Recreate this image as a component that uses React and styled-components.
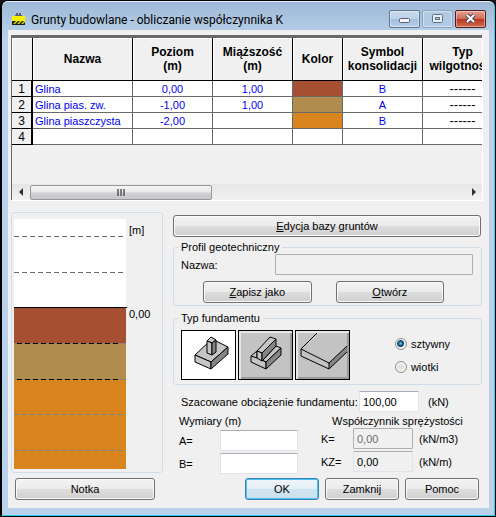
import React, { useState } from "react";
import styled, { createGlobalStyle, css } from "styled-components";

const GlobalStyle = createGlobalStyle`
  * { box-sizing: border-box; }
  body {
    margin: 0;
    background: #14161c;
    color: #000;
    font: 11px/14px "Liberation Sans", Arial, sans-serif;
  }
  button, input { font: inherit; color: inherit; }
`;

const Window = styled.main`
  display: flex;
  flex-direction: column;
  min-height: 100vh;
  padding: 0 6px 8px 6px;
  border: solid #000;
  border-width: 1px 1px 1px 2px;
  border-radius: 7px 7px 0 0;
  background: linear-gradient(#9db8d6, #b9d1ea 36px);
  box-shadow: inset -1px -1px #2fd0ee, inset 0 1px #e4eefa;
`;

const TitleBar = styled.header`
  display: flex;
  align-items: center;
  height: 29px;
  padding: 6px 3px 0 3px;
`;

const Title = styled.h1`
  flex: 1;
  margin: 2px 0 0 5px;
  font: 12px/16px Roboto, sans-serif;
  white-space: nowrap;
`;

const Controls = styled.div`
  display: flex;
  gap: 2px;
`;

const ControlButton = styled.button`
  display: grid;
  place-items: center;
  width: 31px;
  height: 18px;
  padding: 0;
  border: 1px solid ${(p) => (p.$close ? "#5b1a18" : p.$dim ? "#8ea5c0" : "#5f7590")};
  border-radius: 2px;
  background: ${(p) =>
    p.$close
      ? "linear-gradient(#e3a396, #cf6a57 48%, #b83721 52%, #cf6c50)"
      : p.$dim
        ? "#b3cae4"
        : "linear-gradient(#c9daed, #bdd1e8 48%, #a3bddb 52%, #b8d0ea)"};
  box-shadow: inset 0 0 0 1px rgba(255, 255, 255, 0.4);
`;

const Client = styled.div`
  flex: 1;
  padding: 5px 7px 8px 3px;
  background: #f0f0f0;
`;

const GridPane = styled.section`
  display: flex;
  flex-direction: column;
  min-height: 165px;
  margin-bottom: 12px;
  border: solid #696969;
  border-width: 3px 0 0 1px;
  box-shadow: 1px 1px #fff;
`;

const GridScroll = styled.div`
  flex: 1;
  overflow: hidden;
`;

const SoilTable = styled.table`
  width: 491px;
  table-layout: fixed;
  border-collapse: separate;
  border-spacing: 0;
`;

const ColumnHead = styled.th`
  height: 43px;
  padding: 0;
  border: solid #000;
  border-width: 0 1px 1px 0;
  box-shadow: inset 1px 1px #fff;
  background: #f0f0f0;
  font-weight: bold;
  font-size: 12px;
  line-height: 14px;
`;

const RowHead = styled.th`
  height: 16px;
  padding: 0;
  border: solid #000;
  border-width: 0 2px 1px 0;
  background: #f0f0f0;
  font-weight: normal;
  font-size: 12px;
  line-height: 14px;
`;

const Cell = styled.td`
  height: 16px;
  padding: 0 2px;
  border: solid #696969;
  border-width: 0 1px 1px 0;
  background: ${(p) => p.$fill || "#fff"};
  color: ${(p) => (p.$plain ? "#000" : "#0000f0")};
  font-size: ${(p) => (p.$plain ? 13 : 11)}px;
  line-height: 14px;
  text-align: ${(p) => p.$align || "center"};
  white-space: nowrap;
`;

const ScrollBar = styled.div`
  display: flex;
  align-items: center;
  height: 16px;
  background: linear-gradient(#e6e6e6, #f2f2f2);
`;

const ScrollArrow = styled.button`
  display: grid;
  place-items: center;
  width: 18px;
  height: 16px;
  padding: 0;
  border: 0;
  background: none;
`;

const ScrollTrack = styled.div`
  flex: 1;
`;

const ScrollThumb = styled.div`
  display: grid;
  place-items: center;
  width: 42%;
  height: 15px;
  border: 1px solid #979797;
  border-radius: 2px;
  background: linear-gradient(#f5f5f5, #e8e8e8 48%, #d2d2d6 52%, #c8c8cc);
`;

const Lower = styled.div`
  display: grid;
  grid-template-columns: 152px 1fr;
  gap: 10px;
`;

const LeftColumn = styled.div`
  display: flex;
  flex-direction: column;
  justify-content: space-between;
`;

const RightColumn = styled.div`
  display: flex;
  flex-direction: column;
  padding-top: 3px;
`;

const groupFrame = css`
  border: 1px solid #d0dde6;
  border-radius: 3px;
`;

const ProfilePanel = styled.section`
  ${groupFrame}
  height: 261px;
  padding: 6px 2px;
`;

const Button = styled.button`
  height: 22px;
  padding: 0 4px;
  border: 1px solid ${(p) => (p.$primary ? "#3c7fb1" : "#707070")};
  border-radius: 3px;
  background: ${(p) =>
    p.$primary
      ? "linear-gradient(#f0f6fa, #e4eff6 48%, #d0e4ef 52%, #cde2ee)"
      : "linear-gradient(#f2f2f2, #ebebeb 48%, #dddddd 52%, #cfcfcf)"};
  box-shadow: inset 0 0 0 1px ${(p) => (p.$primary ? "#48c4f0" : "#fafafa")};
`;

const NoteButton = styled(Button)`
  margin: 0 8px 0 4px;
`;

const WideButton = styled(Button)`
  margin-right: 1px;
`;

const Group = styled.fieldset`
  ${groupFrame}
  min-width: 0;
  margin: ${(p) => p.$top}px 0 0;
  padding: ${(p) => p.$pad};
`;

const Legend = styled.legend`
  margin-left: -3px;
  padding: 0 3px;
  height: 14px;
`;

const NameRow = styled.div`
  display: grid;
  grid-template-columns: 94px 1fr;
  align-items: center;
`;

const ButtonRow = styled.div`
  display: grid;
  grid-template-columns: 1fr 1fr;
  gap: 24px;
  margin: 6px 29px 0 22px;
`;

const TextBox = styled.input`
  width: 100%;
  min-width: 0;
  height: 21px;
  padding: 0 3px;
  border: 1px solid ${(p) => (p.disabled ? "#afafaf" : "#e2e3ea")};
  border-top-color: ${(p) => (p.disabled ? "#afafaf" : "#abadb3")};
  border-radius: 1px;
  background: ${(p) => (p.disabled || p.readOnly ? "#f0f0f0" : "#fff")};
  color: ${(p) => (p.disabled ? "#6d6d6d" : "#000")};
`;

const TypeRow = styled.div`
  display: flex;
  align-items: center;
  justify-content: space-between;
`;

const Tiles = styled.div`
  display: flex;
  gap: 2px;
`;

const Tile = styled.button`
  width: 55px;
  height: 50px;
  padding: 0;
  border: 1px solid #000;
  background: ${(p) => (p.$selected ? "#fff" : "#c3c3c3")};
  box-shadow: ${(p) =>
    p.$selected ? "none" : "inset 2px 2px #e6e6e6, inset -2px -2px #9a9a9a"};
  svg { display: block; }
`;

const RadioList = styled.div`
  display: flex;
  flex-direction: column;
  gap: 9px;
  margin-right: 23px;
`;

const RadioLabel = styled.label`
  display: flex;
  align-items: center;
  gap: 4px;
`;

const Radio = styled.input`
  appearance: none;
  width: 12px;
  height: 12px;
  margin: 0;
  border: 1px solid #8e8f8f;
  border-radius: 50%;
  background: radial-gradient(#dcdcdc, #f8f8f8);
  box-shadow: inset 0 0 0 1px #f4f4f4;
  &:checked {
    background: radial-gradient(circle at 45% 45%, #6fd0ee 0, #17638f 2px, #123c5a 3px, #e8eef2 4px);
  }
`;

const LoadRow = styled.div`
  display: grid;
  grid-template-columns: 178px 60px 1fr;
  align-items: center;
  margin: 6px 0 2px;
  padding-left: 8px;
  white-space: nowrap;
`;

const Unit = styled.span`
  padding-left: ${(p) => p.$indent || 6}px;
`;

const Details = styled.div`
  display: grid;
  grid-template-columns: 119px 1fr;
  gap: 23px;
  padding-left: 6px;
`;

const FieldSet = styled.div`
  display: flex;
  flex-direction: column;
`;

const FieldHeading = styled.h2`
  margin: 0 0 ${(p) => p.$gap || 0}px ${(p) => p.$indent || 0}px;
  font: inherit;
  white-space: nowrap;
`;

const Field = styled.div`
  display: grid;
  grid-template-columns: ${(p) => p.$columns};
  align-items: center;
  margin-bottom: 2px;
`;

const Actions = styled.div`
  display: grid;
  grid-template-columns: repeat(3, 74px);
  justify-content: end;
  gap: 6px;
  margin: 2px 3px 0 0;
`;

const soils = [
  { name: "Glina", level: "0,00", depth: "1,00", color: "#a55032", symbol: "B" },
  { name: "Glina pias. zw.", level: "-1,00", depth: "1,00", color: "#b08c4e", symbol: "A" },
  { name: "Glina piaszczysta", level: "-2,00", depth: "", color: "#d88520", symbol: "B" },
];

function AppIcon() {
  return (
    <svg width="15" height="14" viewBox="0 0 15 14" aria-hidden="true">
      <path d="M4 3h7v1H4zM5 1h2v2H5zM8 1h2v2H8z" fill="#5a5f68" />
      <path d="M1 4h13v5H1z" fill="#f6f200" />
      <path d="M1 9h13v4H1z" fill="#1c1c1c" />
      <path d="M2 12l3-3h2l-3 3zM6 12l3-3h2l-3 3zM10 12l3-3h1v1l-2 2z" fill="#e0dc00" />
    </svg>
  );
}

function ColumnIcon() {
  return (
    <svg width="53" height="48" viewBox="1 1 53 48" stroke="#000" strokeLinejoin="round" aria-hidden="true">
      <path d="M14 25L31 9L47 17L30 32Z" fill="#c6c6c6" />
      <path d="M14 25L30 32V39L14 32Z" fill="#c6c6c6" />
      <path d="M30 32L47 17V24L30 39Z" fill="#858585" />
      <path d="M26 11L30 7L35 10L31 13Z" fill="#c6c6c6" />
      <path d="M26 11L31 13V25L26 23Z" fill="#c6c6c6" />
      <path d="M31 13L35 10V22L31 25Z" fill="#858585" />
    </svg>
  );
}

function WallIcon() {
  return (
    <svg width="53" height="48" viewBox="1 1 53 48" stroke="#000" strokeLinejoin="round" aria-hidden="true">
      <path d="M13 26L19 21V28L24 31L38 16L43 18L28 32Z" fill="#c6c6c6" />
      <path d="M13 26L19 28L24 31L28 32V39L13 32Z" fill="#c6c6c6" stroke="none" />
      <path d="M19 28L13 26V32L28 39V32L24 30" fill="none" />
      <path d="M28 32L43 18V25L28 39Z" fill="#858585" />
      <path d="M19 21L32 7L38 9L24 23Z" fill="#c6c6c6" />
      <path d="M19 21L24 23V31L19 28Z" fill="#c6c6c6" />
      <path d="M24 23L38 9V16L24 31Z" fill="#858585" />
    </svg>
  );
}

function SlabIcon() {
  return (
    <svg width="53" height="48" viewBox="1 1 53 48" stroke="#000" strokeLinejoin="round" aria-hidden="true">
      <path d="M34 33L52 16V22L34 39Z" fill="#858585" stroke="none" />
      <path d="M22 3L6 19V26L34 39V33L6 19M34 33L52 16M34 39L52 22" fill="none" />
    </svg>
  );
}

function SoilProfile() {
  return (
    <svg width="140" height="250" viewBox="0 0 140 250" role="img" aria-label="Profil gruntu">
      <path d="M0 0h112v88H0z" fill="#fff" />
      <path d="M0 89h112v36H0z" fill="#a55032" />
      <path d="M0 125h112v35H0z" fill="#b08c4e" />
      <path d="M0 160h112v90H0z" fill="#d88520" />
      <path d="M0 88.500h113" stroke="#000" />
      <path d="M0 17.500h112M0 53.500h112" stroke="#686868" strokeDasharray="5 3" />
      <path d="M0 124.500h112M0 160.500h112" stroke="#8a8578" />
      <path d="M3 124.500h102M3 160.500h102" stroke="#000" strokeDasharray="5 3" />
      <path d="M0 195.500h112M0 231.500h112" stroke="#6b8a9a" strokeDasharray="5 3" />
      <text x="115" y="15" fontSize="11">[m]</text>
      <text x="115" y="99" fontSize="11">0,00</text>
    </svg>
  );
}

const tiles = [
  { label: "Stopa", Icon: ColumnIcon },
  { label: "Ława", Icon: WallIcon },
  { label: "Płyta", Icon: SlabIcon },
];

export default function App() {
  const [tile, setTile] = useState(0);
  return (
    <>
      <GlobalStyle />
      <Window>
        <TitleBar>
          <AppIcon />
          <Title>Grunty budowlane - obliczanie współczynnika K</Title>
          <Controls>
            <ControlButton aria-label="Minimalizuj">
              <svg width="13" height="9" viewBox="0 0 13 9">
                <rect x="1.500" y="4.500" width="10" height="4" rx="1" fill="#f4f4f4" stroke="#555f70" />
              </svg>
            </ControlButton>
            <ControlButton $dim aria-label="Maksymalizuj">
              <svg width="11" height="9" viewBox="0 0 11 9">
                <rect x="0.500" y="0.500" width="10" height="8" rx="1" fill="#e8eef5" stroke="#5f6f86" />
                <rect x="3.500" y="3.500" width="4" height="2" fill="#b3cae4" stroke="#5f6f86" />
              </svg>
            </ControlButton>
            <ControlButton $close aria-label="Zamknij okno">
              <svg width="13" height="11" viewBox="0 0 13 11">
                <path d="M3 2l7 7M10 2l-7 7" stroke="#4c4a55" strokeWidth="4" />
                <path d="M3 2l7 7M10 2l-7 7" stroke="#fff" strokeWidth="2" />
              </svg>
            </ControlButton>
          </Controls>
        </TitleBar>
        <Client>
          <GridPane>
            <GridScroll>
              <SoilTable>
                <colgroup>
                  <col width="21" />
                  <col width="100" />
                  <col width="80" />
                  <col width="80" />
                  <col width="50" />
                  <col width="80" />
                  <col width="80" />
                </colgroup>
                <thead>
                  <tr>
                    <ColumnHead />
                    <ColumnHead>Nazwa</ColumnHead>
                    <ColumnHead>Poziom<br />(m)</ColumnHead>
                    <ColumnHead>Miąższość<br />(m)</ColumnHead>
                    <ColumnHead>Kolor</ColumnHead>
                    <ColumnHead>Symbol<br />konsolidacji</ColumnHead>
                    <ColumnHead>Typ<br />wilgotności</ColumnHead>
                  </tr>
                </thead>
                <tbody>
                  {soils.map((s, i) => (
                    <tr key={s.name}>
                      <RowHead>{i + 1}</RowHead>
                      <Cell $align="left">{s.name}</Cell>
                      <Cell>{s.level}</Cell>
                      <Cell>{s.depth}</Cell>
                      <Cell $fill={s.color} />
                      <Cell>{s.symbol}</Cell>
                      <Cell $plain>------</Cell>
                    </tr>
                  ))}
                  <tr>
                    <RowHead>4</RowHead>
                    <Cell /><Cell /><Cell /><Cell /><Cell /><Cell />
                  </tr>
                </tbody>
              </SoilTable>
            </GridScroll>
            <ScrollBar>
              <ScrollArrow aria-label="Przewiń w lewo">
                <svg width="5" height="8" viewBox="0 0 5 8"><path d="M4 0v8L0 4z" fill="#333" /></svg>
              </ScrollArrow>
              <ScrollTrack>
                <ScrollThumb>
                  <svg width="9" height="7" viewBox="0 0 9 7"><path d="M1 0v7M4 0v7M7 0v7" stroke="#555" strokeWidth="1.500" /></svg>
                </ScrollThumb>
              </ScrollTrack>
              <ScrollArrow aria-label="Przewiń w prawo">
                <svg width="5" height="8" viewBox="0 0 5 8"><path d="M1 0v8l4-4z" fill="#333" /></svg>
              </ScrollArrow>
            </ScrollBar>
          </GridPane>
          <Lower>
            <LeftColumn>
              <ProfilePanel><SoilProfile /></ProfilePanel>
              <NoteButton>Notka</NoteButton>
            </LeftColumn>
            <RightColumn>
              <WideButton><u>E</u>dycja bazy gruntów</WideButton>
              <Group $top={3} $pad="0 8px 2px 7px">
                <Legend>Profil geotechniczny</Legend>
                <NameRow>
                  <label htmlFor="profile-name">Nazwa:</label>
                  <TextBox id="profile-name" disabled />
                </NameRow>
                <ButtonRow>
                  <Button><u>Z</u>apisz jako</Button>
                  <Button><u>O</u>twórz</Button>
                </ButtonRow>
              </Group>
              <Group $top={5} $pad="5px 8px 4px 7px">
                <Legend>Typ fundamentu</Legend>
                <TypeRow>
                  <Tiles>
                    {tiles.map(({ label, Icon }, i) => (
                      <Tile key={label} aria-label={label} $selected={tile === i} onClick={() => setTile(i)}>
                        <Icon />
                      </Tile>
                    ))}
                  </Tiles>
                  <RadioList>
                    <RadioLabel><Radio type="radio" name="kind" defaultChecked />sztywny</RadioLabel>
                    <RadioLabel><Radio type="radio" name="kind" />wiotki</RadioLabel>
                  </RadioList>
                </TypeRow>
              </Group>
              <LoadRow>
                <label htmlFor="load">Szacowane obciążenie fundamentu:</label>
                <TextBox id="load" defaultValue="100,00" />
                <Unit $indent={9}>(kN)</Unit>
              </LoadRow>
              <Details>
                <FieldSet>
                  <FieldHeading $gap={2}>Wymiary (m)</FieldHeading>
                  <Field $columns="41px 1fr">
                    <label htmlFor="dim-a">A=</label>
                    <TextBox id="dim-a" />
                  </Field>
                  <Field $columns="41px 1fr">
                    <label htmlFor="dim-b">B=</label>
                    <TextBox id="dim-b" />
                  </Field>
                </FieldSet>
                <FieldSet>
                  <FieldHeading $indent={11}>Współczynnik sprężystości</FieldHeading>
                  <Field $columns="32px 60px 1fr">
                    <label htmlFor="k">K=</label>
                    <TextBox id="k" defaultValue="0,00" disabled />
                    <Unit>(kN/m3)</Unit>
                  </Field>
                  <Field $columns="32px 60px 1fr">
                    <label htmlFor="kz">KZ=</label>
                    <TextBox id="kz" defaultValue="0,00" readOnly />
                    <Unit>(kN/m)</Unit>
                  </Field>
                </FieldSet>
              </Details>
              <Actions>
                <Button $primary>OK</Button>
                <Button>Zamknij</Button>
                <Button>Pomoc</Button>
              </Actions>
            </RightColumn>
          </Lower>
        </Client>
      </Window>
    </>
  );
}
